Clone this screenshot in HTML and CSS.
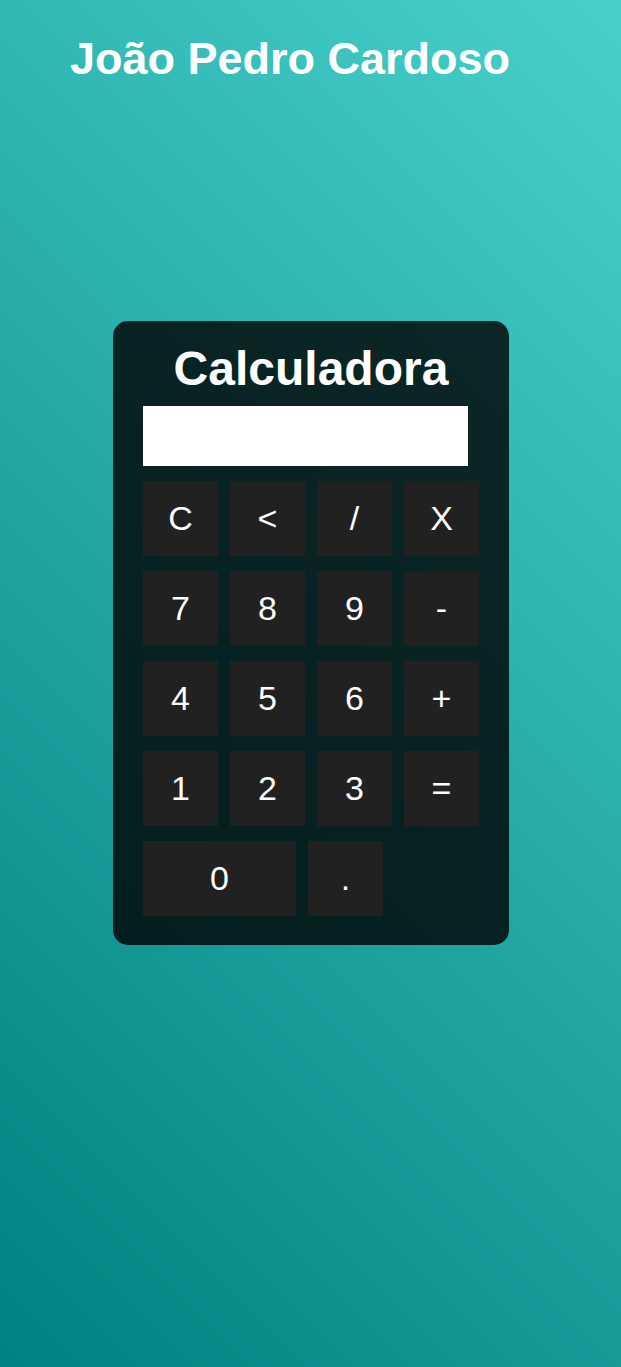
FILE: index.html
```html
<!DOCTYPE html>
<html lang="pt">
<head>
<meta charset="utf-8">
<title>Calculadora</title>
<link rel="stylesheet" href="styles.css">
</head>
<body>
<header class="header">
  <h1 class="name">João Pedro Cardoso</h1>
</header>
<main class="main">
  <section class="calc">
    <h2 class="calc-title">Calculadora</h2>
    <input class="display" type="text" aria-label="visor">
    <div class="keys">
      <div class="row">
        <button class="key">C</button>
        <button class="key">&lt;</button>
        <button class="key">/</button>
        <button class="key">X</button>
      </div>
      <div class="row">
        <button class="key">7</button>
        <button class="key">8</button>
        <button class="key">9</button>
        <button class="key">-</button>
      </div>
      <div class="row">
        <button class="key">4</button>
        <button class="key">5</button>
        <button class="key">6</button>
        <button class="key">+</button>
      </div>
      <div class="row">
        <button class="key">1</button>
        <button class="key">2</button>
        <button class="key">3</button>
        <button class="key">=</button>
      </div>
      <div class="row">
        <button class="key key-wide">0</button>
        <button class="key">.</button>
      </div>
    </div>
  </section>
</main>
</body>
</html>
```
FILE: styles.css
```css
html, body {
  margin: 0;
  padding: 0;
}
body {
  min-height: 100vh;
  background: linear-gradient(45deg, #008080, #48d1cc);
  font-family: "Liberation Sans", Arial, sans-serif;
  color: #fff;
}
.header {
  padding: 33px 0 0 70px;
}
.name {
  margin: 0;
  font-size: 45px;
  font-weight: bold;
  line-height: normal;
}
.main {
  display: flex;
  justify-content: flex-start;
  padding: 236px 0 0 113px;
}
.calc {
  width: 336px;
  padding: 20px 30px 29px;
  background: rgba(0, 0, 0, 0.8);
  border-radius: 15px;
  display: flex;
  flex-direction: column;
}
.calc-title {
  margin: 0;
  text-align: center;
  font-size: 48px;
  font-weight: bold;
  line-height: normal;
}
.display {
  box-sizing: border-box;
  width: 325px;
  height: 60px;
  margin-top: 10px;
  border: none;
  padding: 0;
  background: #fff;
  outline: none;
}
.keys {
  margin-top: 15px;
  display: flex;
  flex-direction: column;
  gap: 15px;
}
.row {
  display: flex;
  gap: 12px;
}
.key {
  width: 75px;
  height: 75px;
  border: none;
  padding: 0;
  background: #222121;
  color: #fff;
  font-family: "Liberation Sans", Arial, sans-serif;
  font-size: 34px;
  display: flex;
  align-items: center;
  justify-content: center;
}
.key-wide {
  width: 153px;
}
```
